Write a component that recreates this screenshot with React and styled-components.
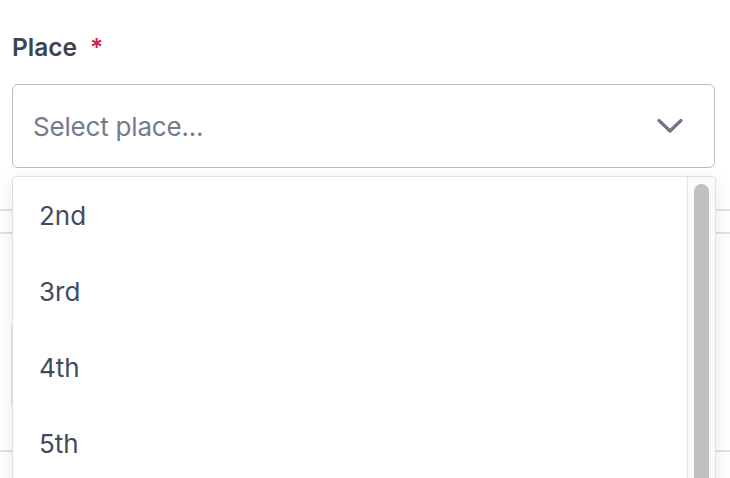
import styled, { createGlobalStyle } from "styled-components";

const GlobalStyle = createGlobalStyle`
  body {
    margin: 0;
    background: #ffffff;
    font-family: "Inter", "Liberation Sans", sans-serif;
  }
`;

const Page = styled.div`
  position: relative;
  width: 730px;
  height: 478px;
  overflow: hidden;
  background: #ffffff;
`;

const Field = styled.div`
  padding: 32px 15px 0 12px;
  display: flex;
  flex-direction: column;
`;

const Label = styled.label`
  font-size: 24.5px;
  line-height: 30px;
  font-weight: 600;
  color: #3d4354;
  display: flex;
  gap: 13px;
`;

const Required = styled.span`
  color: #d3214f;
`;

const SelectBox = styled.div`
  margin-top: 22px;
  height: 82px;
  border: 1px solid #b9bdc9;
  border-radius: 6px;
  display: flex;
  align-items: center;
  justify-content: space-between;
  padding: 0 31px 0 20px;
`;

const Placeholder = styled.span`
  font-size: 26px;
  color: #747b8e;
  font-weight: 400;
  letter-spacing: -0.2px;
`;

const Behind = styled.div`
  margin-top: 41px;
  display: flex;
  flex-direction: column;
`;

const Divider = styled.div`
  height: 2px;
  background: #dfe1e6;
  margin-top: ${(p) => p.$gap}px;
`;

const GhostInput = styled.div`
  margin-top: ${(p) => p.$gap}px;
  margin-left: 11px;
  height: 80px;
  border-left: 1px solid #e2e4ea;
`;

const Menu = styled.div`
  position: absolute;
  left: 12px;
  top: 176px;
  width: 702px;
  height: 360px;
  border: 1px solid #dcdfe4;
  border-radius: 4px;
  background: #ffffff;
  box-shadow: 0 4px 18px rgba(0, 0, 0, 0.09);
  display: flex;
  overflow: hidden;
`;

const List = styled.ul`
  list-style: none;
  margin: 0;
  padding: 0;
  flex: 1;
  overflow: hidden;
`;

const Item = styled.li`
  height: 76px;
  display: flex;
  align-items: center;
  padding-left: 26px;
  font-size: 26px;
  color: #434a5c;
`;

const ScrollTrack = styled.div`
  width: 28px;
  box-sizing: border-box;
  background: #fafafa;
  border-left: 1px solid #e4e4e4;
  padding: 7px 6px 0 6px;
`;

const Thumb = styled.div`
  height: 420px;
  border-radius: 8px;
  background: #c1c1c1;
`;

const Chevron = () => (
  <svg width="26" height="16" viewBox="0 0 26 16" fill="none">
    <path
      d="M2 2.5 L13 13 L24 2.5"
      stroke="#6f7689"
      strokeWidth="3.2"
      strokeLinecap="round"
      strokeLinejoin="round"
    />
  </svg>
);

const places = ["2nd", "3rd", "4th", "5th"];

const App = () => {
  return (
    <Page>
      <GlobalStyle />
      <Field>
        <Label>
          Place <Required>*</Required>
        </Label>
        <SelectBox>
          <Placeholder>Select place...</Placeholder>
          <Chevron />
        </SelectBox>
      </Field>
      <Behind>
        <Divider $gap={0} />
        <Divider $gap={21} />
        <GhostInput $gap={92} />
        <Divider $gap={44} />
      </Behind>
      <Menu>
        <List>
          {places.map((p) => (
            <Item key={p}>{p}</Item>
          ))}
        </List>
        <ScrollTrack>
          <Thumb />
        </ScrollTrack>
      </Menu>
    </Page>
  );
};

export default App;
